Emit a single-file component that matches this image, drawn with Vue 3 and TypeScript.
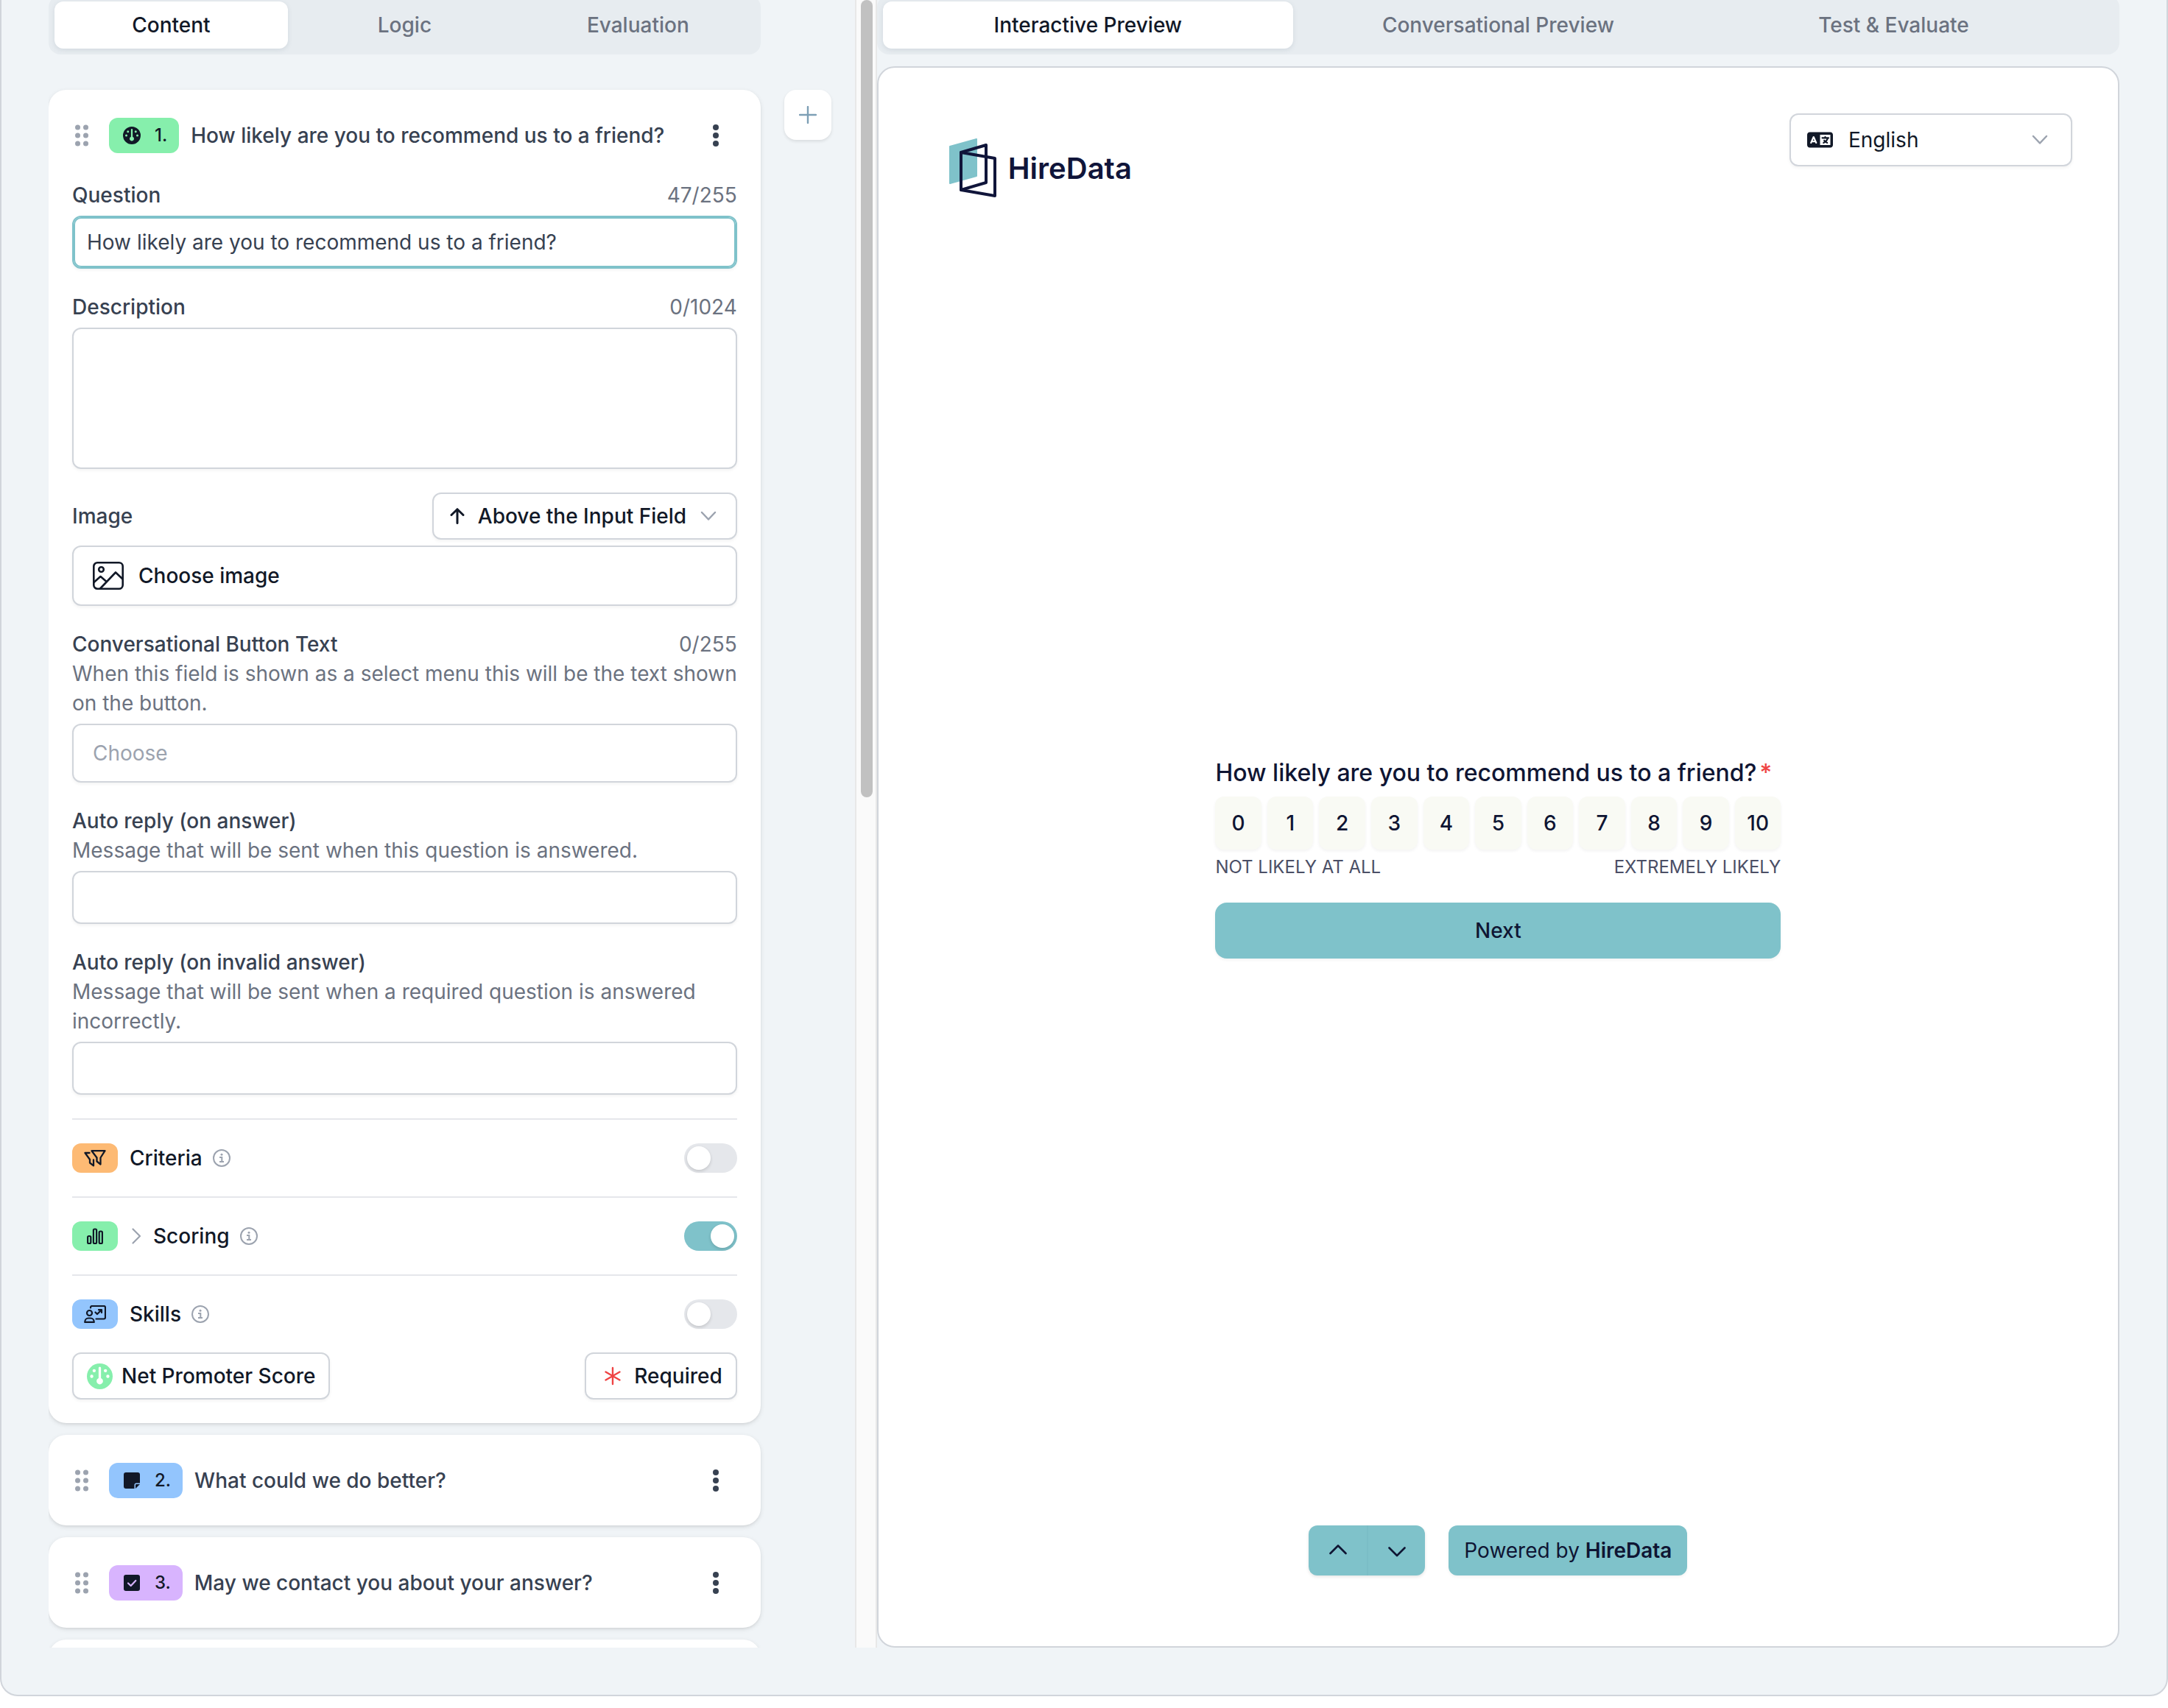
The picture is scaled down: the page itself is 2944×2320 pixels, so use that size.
<script setup lang="ts">
import { ref } from 'vue'

type Tone = 'green' | 'blue' | 'purple' | 'orange'

interface Question {
  id: number
  title: string
  icon: 'note' | 'check'
  tone: Tone
}

interface Setting {
  key: string
  label: string
  icon: 'filters' | 'bars' | 'coach'
  tone: Tone
  expandable: boolean
  enabled: boolean
}

const editorTabs = ['Content', 'Logic', 'Evaluation']
const previewTabs = ['Interactive Preview', 'Conversational Preview', 'Test & Evaluate']
const editorTab = ref('Content')
const previewTab = ref('Interactive Preview')

const title = ref('How likely are you to recommend us to a friend?')
const description = ref('')
const buttonText = ref('')
const autoReply = ref('')
const autoReplyInvalid = ref('')

const settings = ref<Setting[]>([
  { key: 'criteria', label: 'Criteria', icon: 'filters', tone: 'orange', expandable: false, enabled: false },
  { key: 'scoring', label: 'Scoring', icon: 'bars', tone: 'green', expandable: true, enabled: true },
  { key: 'skills', label: 'Skills', icon: 'coach', tone: 'blue', expandable: false, enabled: false },
])

const questions: Question[] = [
  { id: 2, title: 'What could we do better?', icon: 'note', tone: 'blue' },
  { id: 3, title: 'May we contact you about your answer?', icon: 'check', tone: 'purple' },
]

const scores = Array.from({ length: 11 }, (_, n) => n)
</script>

<template>
  <div class="frame">
    <section class="editor">
      <div class="editor-scroll">
        <nav class="tabs">
          <button
            v-for="tab in editorTabs"
            :key="tab"
            type="button"
            class="tab"
            :class="{ active: tab === editorTab }"
            @click="editorTab = tab"
          >{{ tab }}</button>
        </nav>

        <div class="cards">
          <article class="card">
            <header class="card-head">
              <button type="button" class="grip" aria-label="Reorder">
                <svg width="18" height="30" viewBox="0 0 18 30" fill="currentColor">
                  <circle cx="3.5" cy="4" r="3.5" /><circle cx="14.5" cy="4" r="3.5" />
                  <circle cx="3.5" cy="15" r="3.5" /><circle cx="14.5" cy="15" r="3.5" />
                  <circle cx="3.5" cy="26" r="3.5" /><circle cx="14.5" cy="26" r="3.5" />
                </svg>
              </button>
              <span class="badge green">
                <span class="badge-icon">
                  <svg width="24" height="24" viewBox="0 0 512 512" fill="currentColor">
                    <path d="M0 256a256 256 0 1 1 512 0A256 256 0 1 1 0 256zm320 96c0-26.9-16.5-49.9-40-59.3V88c0-13.3-10.7-24-24-24s-24 10.7-24 24V292.7c-23.5 9.5-40 32.5-40 59.3c0 35.3 28.7 64 64 64s64-28.7 64-64zM144 176a32 32 0 1 0 0-64 32 32 0 1 0 0 64zm-16 80a32 32 0 1 0 -64 0 32 32 0 1 0 64 0zm288 32a32 32 0 1 0 0-64 32 32 0 1 0 0 64zM400 144a32 32 0 1 0 -64 0 32 32 0 1 0 64 0z" />
                  </svg>
                </span>
                1.
              </span>
              <h2 class="card-title">{{ title }}</h2>
              <button type="button" class="more" aria-label="Question menu">
                <svg width="8" height="30" viewBox="0 0 8 30" fill="currentColor">
                  <circle cx="4" cy="4" r="4" /><circle cx="4" cy="15" r="4" /><circle cx="4" cy="26" r="4" />
                </svg>
              </button>
            </header>

            <div class="card-body">
              <div class="field">
                <div class="field-head">
                  <label for="question">Question</label>
                  <span class="count">47/255</span>
                </div>
                <input id="question" v-model="title" class="control focused" type="text" />
              </div>

              <div class="field">
                <div class="field-head">
                  <label for="description">Description</label>
                  <span class="count">0/1024</span>
                </div>
                <textarea id="description" v-model="description" class="control area"></textarea>
              </div>

              <div class="field">
                <div class="field-head">
                  <label for="image-position">Image</label>
                  <div class="picker">
                    <svg class="picker-icon" width="20" height="22" viewBox="0 0 20 22" fill="none" stroke="currentColor" stroke-width="3" stroke-linecap="round" stroke-linejoin="round">
                      <path d="M10 20.500V2M2 9.500L10 1.700L18 9.500" />
                    </svg>
                    <select id="image-position" class="picker-select strong">
                      <option>Above the Input Field</option>
                    </select>
                    <svg class="picker-arrow" width="22" height="14" viewBox="0 0 22 14" fill="none" stroke="currentColor" stroke-width="2.500" stroke-linecap="round" stroke-linejoin="round">
                      <path d="M2 2L11 11.500L20 2" />
                    </svg>
                  </div>
                </div>
                <button type="button" class="choose">
                  <svg width="42" height="38" viewBox="0 0 42 38" fill="none" stroke="currentColor" stroke-width="2.600" stroke-linejoin="round" stroke-linecap="round">
                    <rect x="1.300" y="1.300" width="39.400" height="35.400" rx="5" />
                    <circle cx="11.500" cy="10.500" r="3.300" />
                    <path d="M1.500 28L10.500 20L18 26.500M10 36.500L31 14.500L40.500 23.500" />
                  </svg>
                  Choose image
                </button>
              </div>

              <div class="field">
                <div class="field-head">
                  <label for="button-text">Conversational Button Text</label>
                  <span class="count">0/255</span>
                </div>
                <p class="hint">When this field is shown as a select menu this will be the text shown on the button.</p>
                <input id="button-text" v-model="buttonText" class="control tall" type="text" placeholder="Choose" />
              </div>

              <div class="field">
                <div class="field-head"><label for="auto-reply">Auto reply (on answer)</label></div>
                <p class="hint">Message that will be sent when this question is answered.</p>
                <input id="auto-reply" v-model="autoReply" class="control" type="text" />
              </div>

              <div class="field">
                <div class="field-head"><label for="auto-reply-invalid">Auto reply (on invalid answer)</label></div>
                <p class="hint">Message that will be sent when a required question is answered incorrectly.</p>
                <input id="auto-reply-invalid" v-model="autoReplyInvalid" class="control" type="text" />
              </div>

              <div v-for="item in settings" :key="item.key" class="setting">
                <span class="chip" :class="item.tone">
                  <svg v-if="item.icon === 'filters'" width="30" height="24" viewBox="0 0 30 24" fill="none" stroke="currentColor" stroke-width="2.300" stroke-linejoin="round" stroke-linecap="round">
                    <path d="M10.500 2.200H28.500L22.500 11.500V20.500L17.500 16.500V11.500Z" />
                    <path d="M7.500 5H1.500L8 14V18.500L13 22.300V14.500" />
                  </svg>
                  <svg v-else-if="item.icon === 'bars'" width="22" height="24" viewBox="0 0 22 24" fill="none" stroke="currentColor" stroke-width="2.200">
                    <rect x="1.100" y="12" width="4.200" height="10" rx="1.500" />
                    <rect x="8.900" y="2.500" width="4.200" height="19.500" rx="1.500" />
                    <rect x="16.700" y="5.500" width="4.200" height="16.500" rx="1.500" />
                  </svg>
                  <svg v-else width="30" height="24" viewBox="0 0 30 24" fill="none" stroke="currentColor" stroke-width="2.200" stroke-linejoin="round" stroke-linecap="round">
                    <path d="M9 3.500V3a2 2 0 0 1 2-2H27a2 2 0 0 1 2 2V16.500a2 2 0 0 1-2 2H16.500" />
                    <circle cx="7.500" cy="10.500" r="3.500" />
                    <path d="M1.200 22.900C1.200 19.500 3.500 17.500 6 17.500H9C11.500 17.500 13.800 19.500 13.800 22.900Z" />
                    <path d="M15.500 9.500L18 12L23.500 6.500M20 6.200H24V10" />
                  </svg>
                </span>
                <label class="setting-label" :for="item.key">
                  <svg v-if="item.expandable" width="18" height="24" viewBox="0 0 18 24" fill="none" stroke="#9ca3af" stroke-width="2.200" stroke-linecap="round" stroke-linejoin="round">
                    <path d="M4.500 2.500L14 12L4.500 21.500" />
                  </svg>
                  {{ item.label }}
                </label>
                <svg class="info" width="24" height="24" viewBox="0 0 24 24" fill="none" stroke="currentColor" stroke-width="2">
                  <circle cx="12" cy="12" r="11" />
                  <path d="M9 11H12.300V17M9 17H15" />
                  <circle cx="12" cy="7.300" r="1.500" fill="currentColor" stroke="none" />
                </svg>
                <input :id="item.key" v-model="item.enabled" class="toggle" type="checkbox" />
              </div>

              <footer class="card-foot">
                <button type="button" class="action">
                  <span class="action-icon mint">
                    <svg width="35" height="35" viewBox="0 0 512 512" fill="currentColor">
                      <path d="M0 256a256 256 0 1 1 512 0A256 256 0 1 1 0 256zm320 96c0-26.900-16.500-49.900-40-59.300V88c0-13.300-10.700-24-24-24s-24 10.700-24 24V292.700c-23.500 9.500-40 32.500-40 59.300c0 35.300 28.700 64 64 64s64-28.700 64-64zM144 176a32 32 0 1 0 0-64 32 32 0 1 0 0 64zm-16 80a32 32 0 1 0 -64 0 32 32 0 1 0 64 0zm288 32a32 32 0 1 0 0-64 32 32 0 1 0 0 64zM400 144a32 32 0 1 0 -64 0 32 32 0 1 0 64 0z" />
                    </svg>
                  </span>
                  Net Promoter Score
                </button>
                <button type="button" class="action">
                  <span class="action-icon red">
                    <svg width="22" height="26" viewBox="0 0 22 26" fill="none" stroke="currentColor" stroke-width="2.400" stroke-linecap="round">
                      <path d="M11 2V24M1.500 7.500L20.500 18.500M20.500 7.500L1.500 18.500" />
                    </svg>
                  </span>
                  Required
                </button>
              </footer>
            </div>
          </article>

          <article v-for="q in questions" :key="q.id" class="card">
            <header class="card-head">
              <button type="button" class="grip" aria-label="Reorder">
                <svg width="18" height="30" viewBox="0 0 18 30" fill="currentColor">
                  <circle cx="3.5" cy="4" r="3.5" /><circle cx="14.5" cy="4" r="3.5" />
                  <circle cx="3.5" cy="15" r="3.5" /><circle cx="14.5" cy="15" r="3.5" />
                  <circle cx="3.5" cy="26" r="3.5" /><circle cx="14.5" cy="26" r="3.5" />
                </svg>
              </button>
              <span class="badge" :class="q.tone">
                <span class="badge-icon">
                  <svg v-if="q.icon === 'note'" width="22" height="22" viewBox="0 0 22 22" fill="currentColor">
                    <path d="M3 0H19A3 3 0 0 1 22 3V14.500H17A2.500 2.500 0 0 0 14.500 17V22H3A3 3 0 0 1 0 19V3A3 3 0 0 1 3 0Z" />
                    <path d="M22 16L16 22V17A1 1 0 0 1 17 16Z" />
                  </svg>
                  <svg v-else width="22" height="22" viewBox="0 0 22 22">
                    <rect width="22" height="22" rx="3" fill="currentColor" />
                    <path d="M6 11.500L9.700 15L16.300 8" fill="none" stroke="#d8b4fe" stroke-width="2.200" stroke-linecap="round" stroke-linejoin="round" />
                  </svg>
                </span>
                {{ q.id }}.
              </span>
              <h2 class="card-title">{{ q.title }}</h2>
              <button type="button" class="more" aria-label="Question menu">
                <svg width="8" height="30" viewBox="0 0 8 30" fill="currentColor">
                  <circle cx="4" cy="4" r="4" /><circle cx="4" cy="15" r="4" /><circle cx="4" cy="26" r="4" />
                </svg>
              </button>
            </header>
          </article>

          <article class="card"><header class="card-head"></header></article>
        </div>

        <button type="button" class="add" aria-label="Add question">
          <svg width="24" height="24" viewBox="0 0 24 24" fill="none" stroke="currentColor" stroke-width="2.400" stroke-linecap="round">
            <path d="M12 1V23M1 12H23" />
          </svg>
        </button>
      </div>
      <div class="scrollbar"><div class="thumb"></div></div>
    </section>

    <section class="preview">
      <nav class="tabs">
        <button
          v-for="tab in previewTabs"
          :key="tab"
          type="button"
          class="tab"
          :class="{ active: tab === previewTab }"
          @click="previewTab = tab"
        >{{ tab }}</button>
      </nav>

      <div class="stage">
        <header class="stage-head">
          <div class="brand">
            <svg width="66" height="82" viewBox="0 0 66 82">
              <path d="M1 11L37 1V51L1 61Z" fill="#7fc2ca" stroke="#7fc2ca" stroke-width="2" stroke-linejoin="round" />
              <g fill="none" stroke="#10153a" stroke-width="4" stroke-linejoin="round">
                <path d="M16 19L50 9V60L16 70Z" />
                <path d="M16 19L62 27V78L16 70Z" />
              </g>
            </svg>
            <span class="brand-name">HireData</span>
          </div>
          <div class="picker language">
            <svg class="picker-icon" width="35" height="28" viewBox="0 0 640 512" fill="currentColor">
              <path d="M0 128C0 92.700 28.700 64 64 64H256h48 16H576c35.300 0 64 28.700 64 64V384c0 35.300-28.700 64-64 64H320 304 256 64c-35.300 0-64-28.700-64-64V128zm320 0V384H576V128H320zM178.300 175.900c-3.200-7.200-10.400-11.900-18.300-11.900s-15.100 4.700-18.300 11.900l-64 144c-4.500 10.100 .1 21.900 10.200 26.400s21.900-.1 26.400-10.200l8.900-20.100h73.600l8.900 20.100c4.500 10.100 16.300 14.600 26.400 10.200s14.600-16.300 10.200-26.400l-64-144zM160 233.200L179 276H141l19-42.800zM448 164c11 0 20 9 20 20v4h44 16c11 0 20 9 20 20s-9 20-20 20h-2l-1.600 4.500c-8.900 24.400-22.400 46.600-39.600 65.400c.9 .6 1.800 1.100 2.700 1.600l18.900 11.300c9.500 5.700 12.500 18 6.900 27.400s-18 12.500-27.400 6.900l-18.900-11.300c-4.500-2.700-8.800-5.500-13.100-8.500c-10.600 7.500-21.900 14-34 19.400l-3.600 1.600c-10.100 4.500-21.900-.1-26.400-10.200s.1-21.900 10.200-26.400l3.600-1.600c6.400-2.900 12.600-6.100 18.500-9.800l-12.200-12.200c-7.800-7.800-7.800-20.500 0-28.300s20.500-7.800 28.300 0l14.600 14.600 .5 .5c12.400-13.100 22.500-28.300 29.800-45H448 376c-11 0-20-9-20-20s9-20 20-20h52v-4c0-11 9-20 20-20z" />
            </svg>
            <select class="picker-select" aria-label="Language">
              <option>English</option>
            </select>
            <svg class="picker-arrow" width="22" height="14" viewBox="0 0 22 14" fill="none" stroke="currentColor" stroke-width="2.500" stroke-linecap="round" stroke-linejoin="round">
              <path d="M2 2L11 11.500L20 2" />
            </svg>
          </div>
        </header>

        <form class="survey" @submit.prevent>
          <h1 class="survey-title">How likely are you to recommend us to a friend?<span class="star">*</span></h1>
          <div class="scale">
            <button v-for="n in scores" :key="n" type="button" class="score">{{ n }}</button>
          </div>
          <div class="ends"><span>NOT LIKELY AT ALL</span><span>EXTREMELY LIKELY</span></div>
          <button type="submit" class="next">Next</button>
        </form>

        <footer class="stage-foot">
          <div class="stepper">
            <button type="button" aria-label="Previous question">
              <svg width="24" height="24" viewBox="0 0 24 24" fill="none" stroke="currentColor" stroke-width="2.600" stroke-linecap="round" stroke-linejoin="round">
                <path d="M1.500 16L12 5.500L22.500 16" />
              </svg>
            </button>
            <button type="button" aria-label="Next question">
              <svg width="24" height="24" viewBox="0 0 24 24" fill="none" stroke="currentColor" stroke-width="2.600" stroke-linecap="round" stroke-linejoin="round">
                <path d="M1.500 8.500L12 19L22.500 8.500" />
              </svg>
            </button>
          </div>
          <a class="powered" href="#">Powered by <b>HireData</b></a>
        </footer>
      </div>
    </section>
  </div>
</template>

<style>
body {
  margin: 0;
  background: #fff;
}
</style>

<style scoped>
.frame,
.frame * {
  box-sizing: border-box;
}

.frame {
  display: grid;
  grid-template-columns: minmax(0, 2fr) minmax(0, 3fr);
  grid-template-rows: minmax(0, 1fr);
  height: calc(100vh - 16px);
  padding: 0 64px 64px;
  overflow: hidden;
  border: solid #d1d5db;
  border-width: 0 2px 2px;
  border-radius: 0 0 24px 24px;
  background: #f0f4f7;
  color: #111827;
  font-family: Inter, "Liberation Sans", sans-serif;
  font-size: 28px;
  line-height: 40px;
}

button,
input,
select,
textarea {
  margin: 0;
  padding: 0;
  border: 0;
  background: none;
  color: inherit;
  font: inherit;
}

h1,
h2,
p {
  margin: 0;
}

svg {
  display: block;
  flex: none;
}

/* Tabs */
.tabs {
  display: grid;
  grid-template-columns: repeat(3, minmax(0, 1fr));
  height: 80px;
  margin-top: -6px;
  padding: 8px;
  border-radius: 16px;
  background: #e7ecf0;
}

.tab {
  border-radius: 12px;
  color: #6b7280;
  font-weight: 500;
}

.preview .tab:last-child {
  padding-right: 40px;
}

.tab.active {
  background: #fff;
  color: #111827;
  box-shadow: 0 2px 6px rgba(100, 116, 139, 0.16);
}

/* Editor column */
.editor {
  display: flex;
  min-height: 0;
  overflow: hidden;
}

.editor-scroll {
  flex: 1;
  display: grid;
  grid-template-columns: minmax(0, 1fr) 64px;
  grid-template-rows: auto 1fr;
  align-items: start;
  gap: 48px 32px;
  padding-right: 32px;
  overflow: hidden;
}

.cards {
  grid-column: 1;
  display: flex;
  flex-direction: column;
  gap: 16px;
}

.add {
  display: flex;
  align-items: center;
  justify-content: center;
  height: 68px;
  border-radius: 16px;
  background: #fff;
  color: #7d9fb5;
  box-shadow: 0 2px 4px rgba(0, 0, 0, 0.1);
}

.scrollbar {
  width: 30px;
  padding: 0 4px 0 6px;
  border: solid #e8e8e8;
  border-width: 0 2px;
  background: #fafafa;
}

.thumb {
  height: calc(50% - 36px);
  border-radius: 8px;
  background: #c1c1c1;
}

.card {
  border-radius: 24px;
  background: #fff;
  box-shadow: 0 2px 6px rgba(0, 0, 0, 0.1), 0 2px 4px -2px rgba(0, 0, 0, 0.1);
}

.card-head {
  display: flex;
  align-items: center;
  height: 123px;
  padding: 0 57px 0 36px;
}

.grip {
  margin-right: 28px;
  color: #9ca3af;
}

.more {
  margin-left: auto;
  color: #374151;
}

.badge {
  display: flex;
  align-items: center;
  gap: 16px;
  height: 48px;
  padding: 0 16px;
  margin-right: 16px;
  border-radius: 12px;
  font-size: 24px;
  font-weight: 500;
}

.badge-icon {
  display: flex;
  justify-content: center;
  width: 30px;
}

.card-title {
  color: #374151;
  font-size: 28px;
  font-weight: 500;
}

.green {
  background: #86efac;
}

.blue {
  background: #93c5fd;
}

.purple {
  background: #d8b4fe;
}

.orange {
  background: #fdba74;
}

.card-body {
  padding: 0 32px 32px;
}

/* Form fields */
.field {
  margin-bottom: 32px;
}

.field-head {
  display: flex;
  align-items: center;
  justify-content: space-between;
  color: #374151;
  font-weight: 500;
}

.count {
  color: #6b7280;
  font-weight: 400;
}

.hint {
  color: #6b7280;
}

.control {
  display: block;
  width: 100%;
  height: 72px;
  margin-top: 8px;
  padding: 0 18px;
  border: 2px solid #d1d5db;
  border-radius: 12px;
  background: #fff;
  color: #374151;
  box-shadow: 0 2px 4px rgba(0, 0, 0, 0.05);
}

.control.focused {
  border-color: #7fc2ca;
  box-shadow: inset 0 0 0 2px #7fc2ca, 0 2px 4px rgba(0, 0, 0, 0.05);
}

.control.area {
  height: 192px;
  padding: 16px 18px;
  resize: none;
}

.control.tall {
  height: 80px;
  padding: 0 26px;
}

.control::placeholder {
  color: #9ca3af;
  opacity: 1;
}

.picker {
  position: relative;
  display: flex;
  align-items: center;
  height: 64px;
  border: 2px solid #d1d5db;
  border-radius: 12px;
  background: #fff;
  color: #111827;
  box-shadow: 0 2px 4px rgba(0, 0, 0, 0.05);
}

.picker-icon {
  position: absolute;
  left: 22px;
  pointer-events: none;
}

.picker-select {
  flex: 1;
  height: 100%;
  padding: 0 66px 0 60px;
  appearance: none;
}

.picker-select.strong {
  font-weight: 500;
}

.picker-arrow {
  position: absolute;
  right: 26px;
  color: #9ca3af;
  pointer-events: none;
}

.choose {
  display: flex;
  align-items: center;
  gap: 20px;
  width: 100%;
  height: 82px;
  margin-top: 8px;
  padding: 0 26px;
  border: 2px solid #d1d5db;
  border-radius: 12px;
  background: #fff;
  font-weight: 500;
  box-shadow: 0 2px 4px rgba(0, 0, 0, 0.05);
}

/* Settings rows */
.setting {
  display: flex;
  align-items: center;
  gap: 14px;
  padding: 32px 0;
  border-top: 2px solid #e5e7eb;
  font-weight: 500;
}

.chip {
  display: flex;
  align-items: center;
  justify-content: center;
  width: 62px;
  height: 40px;
  margin-right: 2px;
  border-radius: 12px;
}

.setting-label {
  display: flex;
  align-items: center;
  gap: 14px;
}

.info {
  color: #9ca3af;
}

.toggle {
  width: 72px;
  height: 40px;
  margin-left: auto;
  padding: 4px;
  border-radius: 20px;
  background: #e5e7eb;
  appearance: none;
}

.toggle::before {
  content: "";
  display: block;
  width: 32px;
  height: 32px;
  border-radius: 50%;
  background: #fff;
  box-shadow: 0 2px 4px rgba(0, 0, 0, 0.15);
}

.toggle:checked {
  background: #7fc2ca;
}

.toggle:checked::before {
  margin-left: auto;
}

.card-foot {
  display: flex;
  justify-content: space-between;
}

.action {
  display: flex;
  align-items: center;
  gap: 12px;
  height: 64px;
  padding: 0 18px;
  border: 2px solid #d1d5db;
  border-radius: 12px;
  background: #fff;
  font-weight: 500;
  box-shadow: 0 2px 4px rgba(0, 0, 0, 0.05);
}

.action-icon {
  display: flex;
  justify-content: center;
  width: 35px;
}

.mint {
  color: #86efac;
}

.red {
  color: #ef4444;
}

/* Preview column */
.preview {
  display: flex;
  flex-direction: column;
  min-height: 0;
}

.stage {
  flex: 1;
  display: grid;
  grid-template-rows: minmax(0, 1fr) auto minmax(0, 1fr);
  justify-items: center;
  margin-top: 16px;
  border: 2px solid #d1d5db;
  border-radius: 24px;
  background: #fff;
  color: #0f1533;
}

.stage-head {
  display: flex;
  align-items: flex-start;
  justify-content: space-between;
  justify-self: stretch;
  padding: 62px 62px 0;
}

.brand {
  display: flex;
  align-items: center;
  gap: 14px;
  padding: 34px;
}

.brand-name {
  color: #10153a;
  font-size: 40px;
  font-weight: 600;
}

.language {
  width: 384px;
  height: 72px;
}

.language .picker-select {
  padding-left: 78px;
}

.language .picker-arrow {
  right: 31px;
}

.survey {
  width: 768px;
}

.survey-title {
  font-size: 32px;
  font-weight: 500;
  line-height: 48px;
}

.star {
  margin-left: 4px;
  color: #ef4444;
}

.scale {
  display: grid;
  grid-template-columns: repeat(11, minmax(0, 1fr));
  gap: 8px;
  margin: 8px 0;
}

.score {
  height: 72px;
  border-radius: 12px;
  background: #f9faf4;
  font-weight: 500;
  box-shadow: 0 2px 4px rgba(0, 0, 0, 0.05);
}

.ends {
  display: flex;
  justify-content: space-between;
  color: #4b4f66;
  font-size: 24px;
  line-height: 32px;
}

.next {
  width: 100%;
  height: 76px;
  margin-top: 32px;
  border-radius: 16px;
  background: #7fc2ca;
  font-weight: 500;
  box-shadow: 0 2px 4px rgba(0, 0, 0, 0.05);
}

.stage-foot {
  align-self: end;
  display: flex;
  gap: 32px;
  padding-bottom: 96px;
}

.stepper {
  display: flex;
  border-radius: 12px;
  background: #7fc2ca;
  box-shadow: 0 2px 4px rgba(0, 0, 0, 0.1);
}

.stepper button {
  display: flex;
  align-items: center;
  justify-content: center;
  width: 79px;
  height: 68px;
}

.stepper button + button {
  border-left: 2px solid #7abdc6;
}

.powered {
  display: flex;
  align-items: center;
  height: 68px;
  padding: 0 21px;
  border-radius: 12px;
  background: #7fc2ca;
  color: #0f1533;
  text-decoration: none;
  white-space: pre;
  box-shadow: 0 2px 4px rgba(0, 0, 0, 0.05);
}

.powered b {
  font-weight: 600;
}
</style>
